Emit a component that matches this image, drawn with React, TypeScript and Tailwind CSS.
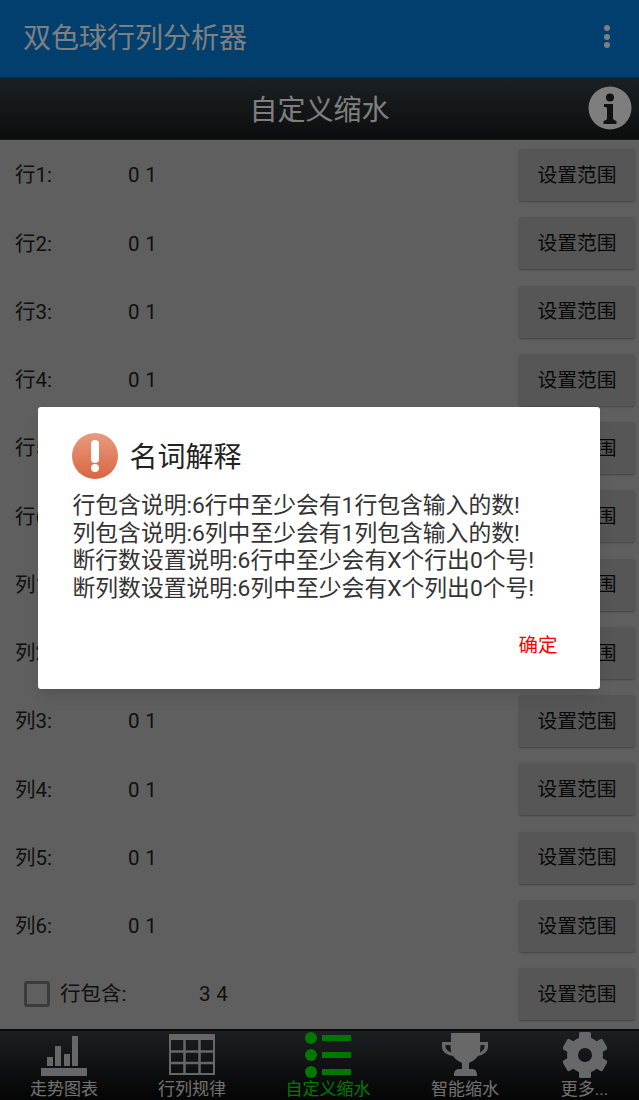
import React from 'react';

const FONT = "font-['Roboto','Noto_Sans_CJK_SC',sans-serif]";

const ROWS = [
  { label: '行1:', value: '0 1' },
  { label: '行2:', value: '0 1' },
  { label: '行3:', value: '0 1' },
  { label: '行4:', value: '0 1' },
  { label: '行5:', value: '0 1' },
  { label: '行6:', value: '0 1' },
  { label: '列1:', value: '0 1' },
  { label: '列2:', value: '0 1' },
  { label: '列3:', value: '0 1' },
  { label: '列4:', value: '0 1' },
  { label: '列5:', value: '0 1' },
  { label: '列6:', value: '0 1' },
];

const NOTES = [
  '行包含说明:6行中至少会有1行包含输入的数!',
  '列包含说明:6列中至少会有1列包含输入的数!',
  '断行数设置说明:6行中至少会有X个行出0个号!',
  '断列数设置说明:6列中至少会有X个列出0个号!',
];

const RangeButton = () => (
  <button className="w-[116px] h-[52px] pt-[1px] rounded-[3px] bg-[#acacac] shadow-[0_1px_2px_rgba(0,0,0,0.3)] text-[19.75px] text-[#111]">
    设置范围
  </button>
);

const ChartIcon = () => (
  <svg width="46" height="43" viewBox="0 -3 46 43" fill="#cfcfcf">
    <rect x="0" y="32" width="46" height="8" />
    <rect x="6" y="21" width="6" height="9" />
    <rect x="14" y="10" width="6" height="20" />
    <rect x="23" y="18" width="6" height="12" />
    <rect x="31" y="0" width="6" height="30" />
  </svg>
);

const GridIcon = () => (
  <svg width="46" height="41" viewBox="0 0 46 41" fill="none" stroke="#cfcfcf">
    <rect x="1" y="1" width="44" height="39" strokeWidth="2" />
    <rect x="0" y="0" width="46" height="6" fill="#cfcfcf" strokeWidth="0" />
    <path d="M15.5 5V40M30.5 5V40M1 17.5H45M1 29H45" strokeWidth="2.5" />
  </svg>
);

const ListIcon = () => (
  <svg width="46" height="46" viewBox="0 0 46 46" fill="#00f000">
    <circle cx="6" cy="6" r="6" />
    <circle cx="6" cy="23" r="6" />
    <circle cx="6" cy="40" r="6" />
    <rect x="17" y="3" width="29" height="6" />
    <rect x="17" y="20" width="29" height="6" />
    <rect x="17" y="37" width="29" height="6" />
  </svg>
);

const TrophyIcon = () => (
  <svg width="46" height="43" viewBox="0 0 46 43" fill="#d0d0d0">
    <path
      fillRule="evenodd"
      d="M9 0H38V9H46V14C46 19 41 22 36 23C33 27 29 29 27 30V36H30C33 36 35 38 35 42V43H12V42C12 38 14 36 17 36H20V30C18 29 14 27 11 23C5 22 0 19 0 14V9H9ZM3.5 12V14C3.5 16 6 18 9 19.5C9 17 8.5 14 8.5 12ZM42.5 12H38.5C38.5 14 38 17 38 19.5C40.5 18 42.5 16 42.5 14Z"
    />
  </svg>
);

const GearIcon = () => (
  <svg width="44" height="46" viewBox="0 0 44 46" fill="#d0d0d0">
    <circle cx="22" cy="23" r="12.5" fill="none" stroke="#d0d0d0" strokeWidth="11" />
    {[0, 60, 120, 180, 240, 300].map(deg => (
      <rect key={deg} x="16" y="0" width="12" height="10" rx="1.5" transform={`rotate(${deg} 22 23)`} />
    ))}
  </svg>
);

const InfoIcon = () => (
  <svg width="44" height="44" viewBox="0 0 44 44">
    <circle cx="22" cy="22" r="21.5" fill="#fdfdfd" />
    <circle cx="22" cy="11.5" r="4" fill="#222" />
    <path d="M16 18H25V32C25 34 27 34.5 28.5 35V38H15.5V35C17.5 34.5 19 34 19 32V22C19 21 17.5 21 16 21Z" fill="#222" />
  </svg>
);

const AlertIcon = () => (
  <svg width="46" height="46" viewBox="0 0 46 46">
    <defs>
      <linearGradient id="alert" x1="0" y1="0" x2="0" y2="1">
        <stop offset="0" stopColor="#e99a80" />
        <stop offset="1" stopColor="#d9663f" />
      </linearGradient>
    </defs>
    <circle cx="23" cy="23" r="23" fill="url(#alert)" />
    <rect x="19" y="7" width="8" height="23" rx="4" fill="#fff" />
    <circle cx="23" cy="35" r="4" fill="#fff" />
  </svg>
);

const NavItem = ({ icon, label, active, width }: { icon: React.ReactNode; label: string; active?: boolean; width: string }) => (
  <div className={`${width} flex flex-col items-center`}>
    <div className="h-[47px] flex items-center">{icon}</div>
    <span className={`text-[17px] leading-[20px] mt-[1px] whitespace-nowrap ${active ? 'text-[#00f000]' : 'text-[#e0e0e0]'}`}>
      {label}
    </span>
  </div>
);

export default function App() {
  return (
    <div className={`${FONT} relative w-[639px] h-[1100px] overflow-hidden flex flex-col bg-[#bebebe]`}>
      {/* Action bar */}
      <header className="h-[77px] shrink-0 bg-[#007edc] flex items-center justify-between pl-[23px] pr-[29px]">
        <h1 className="text-[28px] text-white">双色球行列分析器</h1>
        <div className="flex flex-col gap-[2.5px] mb-[4px]">
          <span className="w-[6px] h-[6px] rounded-full bg-white" />
          <span className="w-[6px] h-[6px] rounded-full bg-white" />
          <span className="w-[6px] h-[6px] rounded-full bg-white" />
        </div>
      </header>

      {/* Sub title */}
      <div className="relative h-[63px] shrink-0 pt-[5px] flex items-center justify-center bg-gradient-to-b from-[#394248] to-[#191c1c] border-b border-[#333]">
        <span className="text-[28px] text-white">自定义缩水</span>
        <div className="absolute right-[7px] top-[9px]">
          <InfoIcon />
        </div>
      </div>

      {/* Rows */}
      <div className="flex-1 flex flex-col pt-[1px]">
        {ROWS.map(row => (
          <div key={row.label} className="h-[68.25px] shrink-0 flex items-center pl-[15px] pr-[4px] text-[20.5px] text-[#222]">
            <span className="w-[113px] pt-[1px]">{row.label}</span>
            <span className="flex-1 pt-[1px] tracking-[0.3px]">{row.value}</span>
            <RangeButton />
          </div>
        ))}
        <div className="h-[68.25px] shrink-0 flex items-center pl-[24px] pr-[4px] text-[20.5px] text-[#222]">
          <span className="w-[26px] h-[26px] rounded-[3px] border-[3px] border-[#777] mr-[10px]" />
          <span className="w-[139px] pt-[1px]">行包含:</span>
          <span className="flex-1 pt-[1px] tracking-[0.3px]">3 4</span>
          <RangeButton />
        </div>
      </div>

      {/* Bottom nav */}
      <nav className="h-[71px] shrink-0 flex border-t-[2px] border-[#1a1a1a] bg-gradient-to-b from-[#383f44] to-[#0a0a0a]">
        <NavItem width="w-[128px]" icon={<ChartIcon />} label="走势图表" />
        <NavItem width="w-[128px]" icon={<GridIcon />} label="行列规律" />
        <NavItem width="w-[144px]" icon={<ListIcon />} label="自定义缩水" active />
        <NavItem width="w-[130px]" icon={<TrophyIcon />} label="智能缩水" />
        <NavItem width="w-[109px]" icon={<GearIcon />} label="更多..." />
      </nav>

      {/* Dim + dialog */}
      <div className="absolute inset-0 bg-black/50 flex items-center justify-center pb-[4px] pr-[2px]">
        <div className="w-[562px] h-[282px] rounded-[3px] bg-white flex flex-col pt-[26px] pl-[34px] pr-[42px] shadow-lg">
          <div className="flex items-center gap-[12px]">
            <AlertIcon />
            <span className="pt-[4px] text-[28px] text-[#222]">名词解释</span>
          </div>
          <div className="mt-[13px] pl-[1px] text-[22.8px] leading-[27.5px] text-[#333] whitespace-nowrap">
            {NOTES.map(line => (
              <p key={line}>{line}</p>
            ))}
          </div>
          <button className="self-end mt-[29px] text-[19.5px] text-[#ff0000]">确定</button>
        </div>
      </div>
    </div>
  );
}
